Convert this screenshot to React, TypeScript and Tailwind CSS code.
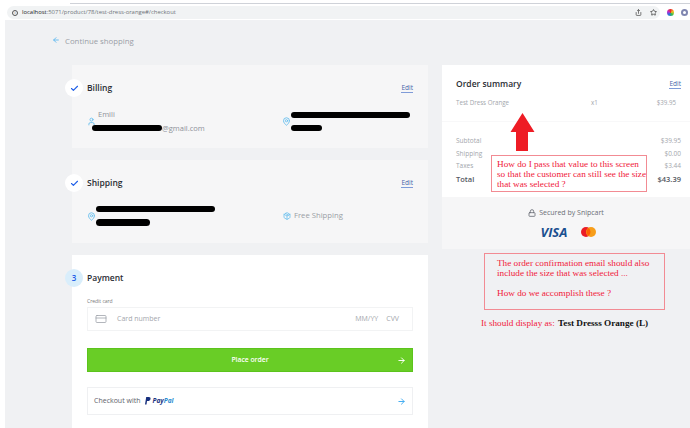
import { ArrowLeft, ArrowRight, Check, CreditCard, Lock, MapPin, Package, Share, Star, User } from 'lucide-react';

const totals = [
  { label: 'Subtotal', value: '$39.95' },
  { label: 'Shipping', value: '$0.00' },
  { label: 'Taxes', value: '$3.44' },
];

function Step({ children, tint }: { children: React.ReactNode; tint?: boolean }) {
  return (
    <span
      className={`flex h-[18px] w-[18px] shrink-0 items-center justify-center rounded-full text-[8px] font-semibold text-[#1f5fe8] ${
        tint ? 'bg-[#d9eefb]' : 'bg-white'
      }`}
    >
      {children}
    </span>
  );
}

function CardHeader({ step, title, tint, edit }: { step: React.ReactNode; title: string; tint?: boolean; edit?: boolean }) {
  return (
    <div className="-ml-[7px] flex h-[18px] items-center gap-1">
      <Step tint={tint}>{step}</Step>
      <span className="text-[8.5px] font-semibold text-[#2a2d34]">{title}</span>
      {edit && (
        <span className="ml-auto mr-[15px] border-b border-[#7f9bd8] text-[6.5px] font-medium leading-[9px] text-[#3f5fa8]">
          Edit
        </span>
      )}
    </div>
  );
}

function Redacted({ className }: { className: string }) {
  return <div className={`rounded-full bg-black ${className}`} />;
}

function Callout({ className, children }: { className: string; children: React.ReactNode }) {
  return (
    <div className={`whitespace-nowrap border border-[#f28b93] font-['Liberation_Serif',serif] text-[9.2px] leading-[10px] text-[#f0203a] ${className}`}>
      {children}
    </div>
  );
}

export default function App() {
  return (
    <div className="relative h-[428px] w-[690px] overflow-hidden bg-white font-['Open_Sans',sans-serif]">
      {/* browser chrome */}
      <div className="flex h-[20px] flex-col pl-[7px]">
        <div className="ml-[63px] mt-[3px] h-px bg-[#cfd2d8]" />
        <div className="mt-[2px] flex items-center">
          <div className="flex h-[13px] w-[653px] items-center rounded-full bg-[#f1f3f4] pl-[5px] pr-[3px]">
            <span className="flex h-[6px] w-[6px] items-center justify-center rounded-full border border-[#555] text-[4px] leading-none text-[#555]">i</span>
            <span className="ml-[4px] text-[5.9px] leading-none text-[#70757a]">
              <span className="text-[#202124]">localhost</span>:5071/product/78/test-dress-orange#/checkout
            </span>
            <Share className="ml-auto h-[7px] w-[7px] text-[#666]" strokeWidth={3} />
            <Star className="ml-[8px] h-[7px] w-[7px] text-[#555]" strokeWidth={3} />
          </div>
          <span className="ml-[7px] h-[7px] w-[7px] rounded-full bg-[conic-gradient(#ea2c2c,#f6c324,#2fbf4f,#2a6fe0,#c02ccf,#ea2c2c)]" />
          <span className="ml-[7px] flex h-[7px] w-[7px] items-center justify-center rounded-full bg-[#7f86b0]">
            <span className="h-[3px] w-[3px] rounded-full bg-white" />
          </span>
        </div>
      </div>

      {/* checkout page */}
      <div className="ml-[5px] h-[408px] bg-[#f0f1f3]">
        <div className="flex h-[45px] items-center pb-[2px] pl-[47px] text-[7.8px] text-[#9a9ea6]">
          <ArrowLeft className="-mt-[4px] h-[8px] w-[8px] text-[#55b4ef]" strokeWidth={2.5} />
          <span className="ml-[5px]">Continue shopping</span>
        </div>

        <div className="flex gap-[14px] pl-[67px]">
          <div className="flex w-[356px] flex-col gap-3">
            <section className="h-[83px] bg-[#f6f6f7] pt-[14px]">
              <CardHeader step={<Check className="h-[9px] w-[9px]" strokeWidth={3} />} title="Billing" edit />
              <div className="mt-[10px] flex">
                <div className="flex w-[213px] items-start pl-[15px]">
                  <User className="mt-[10px] h-[9px] w-[9px] shrink-0 text-[#6cc0ee]" strokeWidth={2.5} />
                  <div className="-ml-[1px] text-[7.5px] leading-[14px] text-[#8e929a]">
                    <div className="ml-[3px]">Emili</div>
                    <div className="-ml-[3px] flex items-center">
                      <Redacted className="h-[6px] w-[70px]" />
                      <span>@gmail.com</span>
                    </div>
                  </div>
                </div>
                <div className="flex items-center">
                  <MapPin className="-ml-[3px] h-[9px] w-[9px] text-[#6cc0ee]" strokeWidth={2.5} />
                  <div className="flex flex-col gap-[7px] pt-px">
                    <Redacted className="h-[6px] w-[119px]" />
                    <Redacted className="h-[6px] w-[31px]" />
                  </div>
                </div>
              </div>
            </section>

            <section className="h-[83px] bg-[#f6f6f7] pt-[14px]">
              <CardHeader step={<Check className="h-[9px] w-[9px]" strokeWidth={3} />} title="Shipping" edit />
              <div className="mt-[14px] flex items-center">
                <div className="flex w-[213px] items-center pl-[15px]">
                  <MapPin className="h-[9px] w-[9px] text-[#6cc0ee]" strokeWidth={2.5} />
                  <div className="flex flex-col gap-[7px]">
                    <Redacted className="h-[6px] w-[119px]" />
                    <Redacted className="h-[7px] w-[54px]" />
                  </div>
                </div>
                <div className="flex items-center gap-[3px] text-[7.7px] text-[#9a9ea6]">
                  <Package className="-ml-[2px] h-[8px] w-[8px] text-[#6cc0ee]" strokeWidth={2.5} />
                  Free Shipping
                </div>
              </div>
            </section>

            <section className="h-[173px] bg-white pt-[14px]">
              <CardHeader step="3" title="Payment" tint />
              <div className="mt-[10px] px-[15px]">
                <div className="text-[5px] leading-[8px] text-[#777]">Credit card</div>
                <div className="mt-[2px] flex h-[24px] items-center border border-[#f2f3f4] pl-[7px] pr-[13px] text-[7px] text-[#a3a6ac]">
                  <CreditCard className="h-[12px] w-[12px] text-[#9a9ea6]" strokeWidth={1.5} />
                  <span className="ml-[10px]">Card number</span>
                  <span className="ml-auto">MM/YY</span>
                  <span className="ml-[8px]">CVV</span>
                </div>
                <div className="relative mt-[17px] flex h-[24px] items-center justify-center border border-[#5cc41c] bg-[#69cd26] text-[6.8px] font-semibold text-white">
                  Place order
                  <ArrowRight className="absolute right-[6px] h-[9px] w-[9px]" strokeWidth={2.5} />
                </div>
                <div className="mt-[15px] flex h-[28px] items-center border border-[#eff0f2] pl-[6px] pr-[6px] text-[7px] font-medium text-[#5e626a]">
                  Checkout with
                  <svg className="ml-[5px] h-[8px] w-[6px]" viewBox="0 0 6 8">
                    <path d="M1.2 0h2.600c1.400 0 2 .8 1.700 2-.3 1.400-1.300 2.100-2.600 2.100H2L1.500 7.400H0z" fill="#17307e" />
                  </svg>
                  <span className="ml-[1px] text-[6.5px] font-bold italic text-[#17307e]">
                    Pay<span className="text-[#2a8bd0]">Pal</span>
                  </span>
                  <ArrowRight className="ml-auto h-[9px] w-[9px] text-[#3aa9f0]" strokeWidth={2.5} />
                </div>
              </div>
            </section>
          </div>

          <aside className="w-[248px]">
            <div className="h-[132px] bg-white">
              <div className="h-[57px] border-b border-[#f8f8f9] pl-[14px] pr-[9px] pt-[13px]">
                <div className="flex items-center">
                  <span className="text-[8.5px] font-semibold text-[#2a2d34]">Order summary</span>
                  <span className="ml-auto border-b border-[#7f9bd8] text-[6.5px] font-medium leading-[9px] text-[#3f5fa8]">Edit</span>
                </div>
                <div className="mt-[7px] flex text-[6.2px] text-[#a3a6ac]">
                  <span className="w-[135px]">Test Dress Orange</span>
                  <span>x1</span>
                  <span className="ml-auto mr-[5px]">$39.95</span>
                </div>
              </div>
              <div className="pl-[14px] pr-[9px] pt-[13px] text-[6.5px] leading-[12.5px] text-[#a3a6ac]">
                {totals.map((row) => (
                  <div key={row.label} className="flex justify-between">
                    <span>{row.label}</span>
                    <span>{row.value}</span>
                  </div>
                ))}
                <div className="flex justify-between text-[7.5px] font-semibold text-[#555962]">
                  <span>Total</span>
                  <span>$43.39</span>
                </div>
              </div>
            </div>
            <div className="h-[52px] bg-[#f6f6f7] pt-[11px]">
              <div className="flex items-center justify-center gap-[3px] text-[7px] font-medium text-[#6a6e76]">
                <Lock className="h-[8px] w-[8px]" strokeWidth={2.5} />
                Secured by Snipcart
              </div>
              <div className="mt-[6px] flex items-center justify-center gap-[14px] pl-[5px]">
                <span className="text-[13px] font-bold italic leading-[14px] text-[#1a4f8f]">VISA</span>
                <svg className="h-[10px] w-[15px]" viewBox="0 0 15 10">
                  <circle cx="5" cy="5" r="5" fill="#eb1c26" />
                  <circle cx="10" cy="5" r="5" fill="#f79e1b" />
                  <path d="M7.500 1a5 5 0 0 1 0 8 5 5 0 0 1 0-8z" fill="#ff5f00" />
                </svg>
              </div>
            </div>
            <Callout className="ml-[42px] mt-[4px] h-[57px] w-[181px] bg-[#f0f1f3] pl-[12px] pt-[4px]">
              <p>The order confirmation email should also</p>
              <p>include the size that was selected ...</p>
              <p className="mt-[10px]">How do we accomplish these ?</p>
            </Callout>
            <p className="ml-[39px] mt-[7px] whitespace-pre font-['Liberation_Serif',serif] text-[9.2px] leading-[12px] text-[#f0203a]">
              It should display as: <span className="ml-[1px] font-bold text-[#111]">Test Dresss Orange (L)</span>
            </p>
          </aside>
        </div>
      </div>

      {/* annotations drawn over the order summary */}
      <svg className="absolute left-[510px] top-[113px] h-[38px] w-[25px]" viewBox="0 0 25 38">
        <path d="M12.500 0L24.500 19H18V38H6V19H.5z" fill="#ee1c25" />
      </svg>
      <Callout className="absolute left-[491px] top-[155px] h-[37px] w-[156px] bg-white pl-[5px] pt-[3px]">
        <p>How do I pass that value to this screen</p>
        <p>so that the customer can still see the size</p>
        <p>that was selected ?</p>
      </Callout>
    </div>
  );
}
